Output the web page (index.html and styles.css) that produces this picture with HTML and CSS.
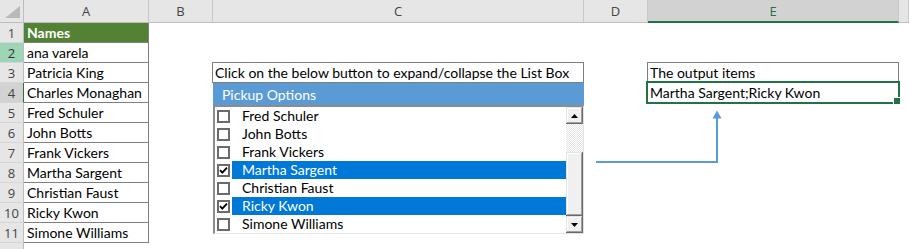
FILE: index.html
```html
<!DOCTYPE html>
<html>
<head>
<meta charset="utf-8">
<title>List Box</title>
<link rel="stylesheet" href="styles.css">
</head>
<body>
<div class="sheet">
  <div class="grid">
    <div class="ch corner"><svg class="tri" width="15" height="12" viewBox="0 0 15 12"><polygon points="15,0 15,12 0,12" fill="#b9b9b9"/></svg></div>
    <div class="ch">A</div>
    <div class="ch">B</div>
    <div class="ch">C</div>
    <div class="ch">D</div>
    <div class="ch active">E</div>
    <div class="ch"></div>

    <div class="rh">1</div><div class="c a head">Names</div><div class="c"></div><div class="c"></div><div class="c"></div><div class="c"></div><div class="c"></div>
    <div class="rh hl">2</div><div class="c a">ana varela</div><div class="c"></div><div class="c"></div><div class="c"></div><div class="c"></div><div class="c"></div>
    <div class="rh">3</div><div class="c a">Patricia King</div><div class="c"></div><div class="c boxed">Click on the below button to expand/collapse the List Box</div><div class="c"></div><div class="c boxed">The output items</div><div class="c"></div>
    <div class="rh cur">4</div><div class="c a">Charles Monaghan</div><div class="c"></div><div class="c"></div><div class="c"></div><div class="c sel">Martha Sargent;Ricky Kwon</div><div class="c"></div>
    <div class="rh">5</div><div class="c a">Fred Schuler</div><div class="c"></div><div class="c"></div><div class="c"></div><div class="c"></div><div class="c"></div>
    <div class="rh">6</div><div class="c a">John Botts</div><div class="c"></div><div class="c"></div><div class="c"></div><div class="c"></div><div class="c"></div>
    <div class="rh">7</div><div class="c a">Frank Vickers</div><div class="c"></div><div class="c"></div><div class="c"></div><div class="c"></div><div class="c"></div>
    <div class="rh">8</div><div class="c a">Martha Sargent</div><div class="c"></div><div class="c"></div><div class="c"></div><div class="c"></div><div class="c"></div>
    <div class="rh">9</div><div class="c a">Christian Faust</div><div class="c"></div><div class="c"></div><div class="c"></div><div class="c"></div><div class="c"></div>
    <div class="rh">10</div><div class="c a">Ricky Kwon</div><div class="c"></div><div class="c"></div><div class="c"></div><div class="c"></div><div class="c"></div>
    <div class="rh">11</div><div class="c a">Simone Williams</div><div class="c"></div><div class="c"></div><div class="c"></div><div class="c"></div><div class="c"></div>
    <div class="rh"></div><div class="c"></div><div class="c"></div><div class="c"></div><div class="c"></div><div class="c"></div><div class="c"></div>
  </div>

  <div class="pickup">Pickup Options</div>

  <div class="listbox">
    <div class="items">
      <div class="item"><span class="cb"></span><span class="lbl">Fred Schuler</span></div>
      <div class="item"><span class="cb"></span><span class="lbl">John Botts</span></div>
      <div class="item"><span class="cb"></span><span class="lbl">Frank Vickers</span></div>
      <div class="item on"><span class="cb"><svg width="9" height="9" viewBox="0 0 9 9"><path d="M1 4.2 L3.3 6.6 L8 1.6" fill="none" stroke="#000" stroke-width="1.8"/></svg></span><span class="lbl">Martha Sargent</span></div>
      <div class="item"><span class="cb"></span><span class="lbl">Christian Faust</span></div>
      <div class="item on"><span class="cb"><svg width="9" height="9" viewBox="0 0 9 9"><path d="M1 4.2 L3.3 6.6 L8 1.6" fill="none" stroke="#000" stroke-width="1.8"/></svg></span><span class="lbl">Ricky Kwon</span></div>
      <div class="item"><span class="cb"></span><span class="lbl">Simone Williams</span></div>
    </div>
    <div class="scroll">
      <div class="btn"><svg width="7" height="4" viewBox="0 0 7 4"><polygon points="3.5,0 7,4 0,4" fill="#000"/></svg></div>
      <div class="track"></div>
      <div class="thumb"></div>
      <div class="btn"><svg width="7" height="4" viewBox="0 0 7 4"><polygon points="0,0 7,0 3.5,4" fill="#000"/></svg></div>
    </div>
  </div>

  <svg class="connector" width="909" height="249" viewBox="0 0 909 249">
    <path d="M596 162 H717 V117" fill="none" stroke="#5b9bd5" stroke-width="2"/>
    <polygon points="717,110.5 712.5,118.5 721.5,118.5" fill="#5b9bd5"/>
  </svg>
</div>
</body>
</html>
```
FILE: styles.css
```css
* { box-sizing: border-box; }

body {
  margin: 0;
  width: 909px;
  height: 249px;
  overflow: hidden;
  background: #fff;
  font-family: Lato, "Liberation Sans", sans-serif;
}

.sheet {
  position: relative;
  width: 909px;
  height: 249px;
  overflow: hidden;
}

.grid {
  display: grid;
  grid-template-columns: 24px 125px 64px 371px 64px 251px 1fr;
  grid-template-rows: 23px repeat(12, 20px);
}

.ch {
  background: #e6e6e6;
  border-right: 1px solid #c8c8c8;
  border-bottom: 1px solid #bdbdbd;
  font-family: "Open Sans", sans-serif;
  font-size: 13px;
  color: #444;
  display: flex;
  align-items: center;
  justify-content: center;
}

.ch.corner {
  justify-content: flex-end;
  align-items: flex-end;
  padding: 0 3px 4px 0;
  border-right-color: #bdbdbd;
}

.tri { display: block; }

.ch.active {
  background: #d2d2d2;
  color: #217346;
  border-bottom: 2px solid #217346;
}

.rh {
  background: #e6e6e6;
  border-right: 1px solid #bdbdbd;
  border-bottom: 1px solid #d6d6d6;
  font-family: "Open Sans", sans-serif;
  font-size: 13px;
  color: #444;
  display: flex;
  align-items: center;
  justify-content: center;
}

.rh.hl { background: #9fd5b7; color: #333; }
.rh.cur { background: #d2d2d2; border-right-color: #217346; }

.c {
  font-size: 14px;
  line-height: 20px;
  padding-left: 3px;
  white-space: nowrap;
  color: #000;
}

.a {
  border-right: 1px solid #7f7f7f;
  border-bottom: 1px solid #7f7f7f;
}

.a.head {
  background: #548235;
  color: #fff;
  font-weight: bold;
}

.boxed {
  margin: -1px 0 0 -1px;
  border: 1px solid #7f7f7f;
  padding-left: 2px;
  line-height: 19px;
}

.sel { position: relative; padding-left: 2px; }

.sel::after {
  content: "";
  position: absolute;
  left: -2px;
  top: -2px;
  right: -1px;
  bottom: -1px;
  border: 2px solid #217346;
}

.sel::before {
  content: "";
  position: absolute;
  right: -2px;
  bottom: -2px;
  width: 6px;
  height: 6px;
  background: #217346;
  border: 1px solid #fff;
  z-index: 1;
}

.pickup {
  position: absolute;
  left: 213px;
  top: 83px;
  width: 371px;
  height: 22px;
  background: #5b9bd5;
  color: #fff;
  font-size: 14px;
  line-height: 23px;
  padding-left: 9px;
}

.listbox {
  position: absolute;
  left: 213px;
  top: 105px;
  width: 371px;
  height: 129px;
  background: #fff;
  border-top: 2px solid #8c8c8c;
  border-left: 2px solid #8c8c8c;
  border-right: 1px solid #e3e3e3;
  border-bottom: 1px solid #e3e3e3;
  display: flex;
}

.items {
  flex: 1;
  display: flex;
  flex-direction: column;
}

.item {
  height: 18px;
  display: flex;
  align-items: center;
  padding-left: 2px;
  font-size: 14px;
  color: #000;
  white-space: nowrap;
}

.cb {
  width: 13px;
  height: 13px;
  border: 2px solid #6b6b6b;
  background: #fff;
  display: flex;
  align-items: center;
  justify-content: center;
  flex: none;
}

.cb svg { display: block; }

.lbl {
  margin-left: 2px;
  flex: 1;
  height: 18px;
  line-height: 18px;
  padding-left: 10px;
}

.item.on .lbl {
  background: #0078d7;
  color: #fff;
}

.scroll {
  width: 17px;
  display: flex;
  flex-direction: column;
}

.btn, .thumb {
  background: #f0f0f0;
  box-shadow: inset -1px -1px #696969, inset 1px 1px #e3e3e3, inset -2px -2px #a0a0a0, inset 2px 2px #fff;
}

.btn {
  height: 17px;
  display: flex;
  align-items: center;
  justify-content: center;
}

.btn svg { display: block; }

.track {
  height: 28px;
  background: repeating-conic-gradient(#e4e4e4 0 25%, #fff 0 50%) 0 0 / 2px 2px;
}

.thumb { height: 64px; }

.connector {
  position: absolute;
  left: 0;
  top: 0;
  pointer-events: none;
}
```
